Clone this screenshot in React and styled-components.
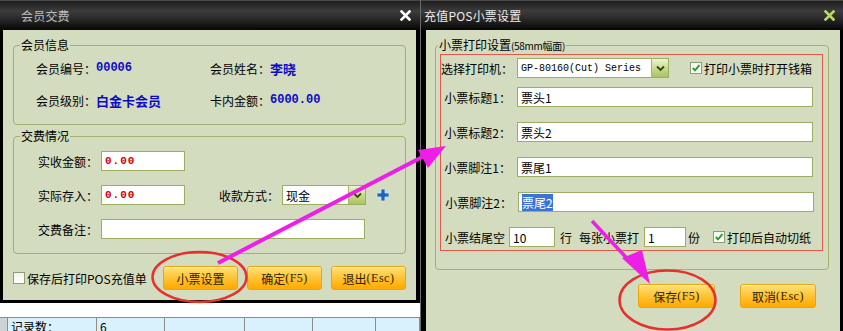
import React from 'react';
import styled, { createGlobalStyle } from 'styled-components';

const GlobalStyle = createGlobalStyle`
  html, body {
    margin: 0;
    padding: 0;
    background: #ffffff;
    overflow: hidden;
  }
  body {
    font-family: "Noto Sans CJK SC", "Liberation Sans", sans-serif;
    font-size: 12px;
    color: #000;
  }
`;

const Page = styled.div`
  position: relative;
  width: 843px;
  height: 331px;
  display: flex;
  overflow: hidden;
`;

const LeftColumn = styled.div`
  width: 420px;
  display: flex;
  flex-direction: column;
  background: #fff;
  overflow: hidden;
`;

const Dialog = styled.div`
  flex: none;
  display: flex;
  flex-direction: column;
  background: #000;
  width: ${(p) => p.width}px;
  height: ${(p) => (p.height ? `${p.height}px` : 'auto')};
  padding-bottom: ${(p) => p.padBottom || 0}px;
  border-left: ${(p) => (p.seam ? '1px solid #6a6a6a' : 'none')};
  box-sizing: border-box;
`;

const TitleBar = styled.div`
  height: 30px;
  flex: none;
  display: flex;
  align-items: center;
  justify-content: space-between;
  padding: 0 ${(p) => p.padRight}px 0 ${(p) => p.padLeft}px;
  background: linear-gradient(#1e1e1e 0%, #3c3c3c 35%, #2a2a2a 60%, #060606 100%);
  border-top: 1px solid #4a4a4a;
  box-sizing: border-box;
`;

const Title = styled.span`
  color: ${(p) => p.color};
  font-size: 12px;
  letter-spacing: 0.2px;
`;

const Body = styled.div`
  flex: 1;
  margin: 0 ${(p) => p.mr}px 0 ${(p) => p.ml}px;
  background: #d3dcbf;
  padding: 7px ${(p) => p.pr}px 0 ${(p) => p.pl}px;
  box-sizing: border-box;
  display: flex;
  flex-direction: column;
`;

const Group = styled.fieldset`
  margin: ${(p) => p.mt || 0}px 0 0 0;
  border: 1px solid #a1b170;
  border-radius: 4px;
  padding: 0 ${(p) => p.pr || 0}px ${(p) => p.pb}px ${(p) => p.pl}px;
  min-width: 0;
`;

const Legend = styled.legend`
  padding: 0 1px;
  margin-left: -${(p) => p.shift}px;
  font-size: 12px;
  line-height: 16px;
`;

const Small = styled.span`
  font-size: 10px;
  letter-spacing: -0.3px;
`;

const InfoGrid = styled.div`
  display: grid;
  grid-template-columns: 174px 1fr;
  grid-auto-rows: 30px;
  row-gap: 2px;
  align-items: center;
`;

const Pair = styled.div`
  display: flex;
  align-items: center;
`;

const Label = styled.span`
  box-sizing: border-box;
  white-space: nowrap;
  width: ${(p) => (p.width ? `${p.width}px` : 'auto')};
  text-align: ${(p) => (p.right ? 'right' : 'left')};
  padding-left: ${(p) => p.lead || 0}px;
  padding-right: ${(p) => p.gap || 0}px;
  flex: none;
`;

const Value = styled.span`
  color: #0a0ac8;
  font-weight: bold;
  font-size: ${(p) => (p.mono ? '12px' : '13px')};
  font-family: ${(p) => (p.mono ? '"Liberation Mono", monospace' : '"Noto Sans CJK SC", sans-serif')};
`;

const FormRows = styled.div`
  display: flex;
  flex-direction: column;
`;

const FormRow = styled.div`
  display: flex;
  align-items: center;
  height: ${(p) => p.h}px;
`;

const Input = styled.div`
  width: ${(p) => p.w}px;
  height: 20px;
  background: #fff;
  border: 1px solid #9bae62;
  box-sizing: border-box;
  display: flex;
  align-items: center;
  padding-left: 3px;
  margin-left: ${(p) => p.ml || 0}px;
  margin-right: ${(p) => p.mr || 0}px;
  flex: none;
  color: ${(p) => (p.red ? '#d40000' : '#000')};
  font-weight: ${(p) => (p.red ? 'bold' : 'normal')};
  font-family: ${(p) => (p.mono ? '"Liberation Mono", monospace' : 'inherit')};
  font-size: ${(p) => (p.mono ? `${p.mono === 'narrow' ? 10 : 11}px` : '12px')};
  letter-spacing: ${(p) => (p.red ? '1px' : '0')};
  white-space: nowrap;
  overflow: hidden;
`;

const SelectBox = styled(Input)`
  justify-content: space-between;
  padding-right: 0;
`;

const DropButton = styled.div`
  width: 16px;
  height: 18px;
  flex: none;
  background: linear-gradient(#eef4cf, #c3d685 60%, #aac264);
  border-left: 1px solid #a4b86c;
  display: flex;
  align-items: center;
  justify-content: center;
`;

const SelectedText = styled.span`
  background: #3a74d4;
  color: #fff;
`;

const Buttons = styled.div`
  display: flex;
  gap: ${(p) => p.gap}px;
  margin-left: auto;
`;

const OrangeButton = styled.div`
  width: ${(p) => p.w}px;
  height: 24px;
  box-sizing: border-box;
  border: 1px solid #e8a712;
  border-radius: 3px;
  background: linear-gradient(#ffe27a 0%, #ffc63a 45%, #ffa900 100%);
  color: #2e2200;
  display: flex;
  align-items: center;
  justify-content: center;
  font-size: 12px;
  white-space: nowrap;
  box-shadow: inset 0 1px 0 rgba(255, 255, 255, 0.5);
`;

const Latin = styled.span`
  font-family: "Liberation Serif", serif;
  font-size: 12px;
  letter-spacing: 0.5px;
`;

const BottomBar = styled.div`
  display: flex;
  align-items: center;
  height: 24px;
  margin-top: ${(p) => p.mt}px;
  padding-right: ${(p) => p.pr || 0}px;
`;

const Check = styled.span`
  width: 12px;
  height: 12px;
  box-sizing: border-box;
  border: 1px solid #8e9a78;
  background: linear-gradient(#f2f2ee, #ffffff);
  display: inline-flex;
  align-items: center;
  justify-content: center;
  margin: 0 ${(p) => p.gap || 2}px 0 ${(p) => p.ml || 0}px;
  flex: none;
`;

const CheckLabel = styled.label`
  display: flex;
  align-items: center;
  white-space: nowrap;
  margin-left: ${(p) => p.ml || 0}px;
`;

const RedFrame = styled.div`
  border: 1px solid #e2584a;
  padding: 2px 0 2px 0;
  display: flex;
  flex-direction: column;
  gap: 13px;
`;

const TicketRow = styled.div`
  display: flex;
  align-items: center;
  height: 22px;
  margin-bottom: ${(p) => (p.tight ? -6 : 0)}px;
`;

const Table = styled.div`
  flex: none;
  margin-top: 14px;
  display: grid;
  grid-template-columns: 8px 89px 68px 80px 68px 63px 44px;
  height: 20px;
  border-top: 1px solid #8c8c8c;
  background: #d9f1fc;
`;

const Cell = styled.div`
  border-right: 1px solid #8c8c8c;
  background: ${(p) => (p.head ? '#cfd3d4' : 'transparent')};
  padding-left: 3px;
  font-size: 12px;
  line-height: 17px;
  white-space: nowrap;
  overflow: hidden;
`;

const Overlay = styled.svg`
  position: absolute;
  left: 0;
  top: 0;
  pointer-events: none;
`;

const CloseIcon = ({ color }) => (
  <svg width="11" height="11" viewBox="0 0 11 11">
    <path d="M1.5 1.5 L9.5 9.5 M9.5 1.5 L1.5 9.5" stroke={color} strokeWidth="2.6" strokeLinecap="square" />
  </svg>
);

const Chevron = () => (
  <svg width="9" height="7" viewBox="0 0 9 7">
    <path d="M1 1.5 L4.5 5 L8 1.5" stroke="#2f4a10" strokeWidth="1.8" fill="none" />
  </svg>
);

const Tick = () => (
  <svg width="10" height="10" viewBox="0 0 10 10">
    <path d="M1.8 5 L4 7.4 L8.4 2.2" stroke="#24a02c" strokeWidth="1.9" fill="none" />
  </svg>
);

const PlusIcon = () => (
  <svg width="14" height="14" viewBox="0 0 14 14" style={{ marginLeft: 10 }}>
    <path d="M5 1 H9 V5 H13 V9 H9 V13 H5 V9 H1 V5 H5 Z" fill="#1c64c0" stroke="#d8e4f4" strokeWidth="0.8" />
  </svg>
);

const ticketLines = [
  ['小票标题1：', '票头1'],
  ['小票标题2：', '票头2'],
  ['小票脚注1：', '票尾1'],
];

export default function App() {
  return (
    <>
      <GlobalStyle />
      <Page>
        <LeftColumn>
          <Dialog width={420} height={303} padBottom={3}>
            <TitleBar padLeft={21} padRight={9}>
              <Title color="#bdbdbd">会员交费</Title>
              <CloseIcon color="#ffffff" />
            </TitleBar>
            <Body ml={3} mr={4} pl={10} pr={10}>
              <Group pl={22} pb={9}>
                <Legend shift={16}>会员信息</Legend>
                <InfoGrid>
                  <Pair>
                    <Label>会员编号：</Label>
                    <Value mono>00006</Value>
                  </Pair>
                  <Pair>
                    <Label>会员姓名：</Label>
                    <Value>李晓</Value>
                  </Pair>
                  <Pair>
                    <Label>会员级别：</Label>
                    <Value>白金卡会员</Value>
                  </Pair>
                  <Pair>
                    <Label>卡内金额：</Label>
                    <Value mono>6000.00</Value>
                  </Pair>
                </InfoGrid>
              </Group>

              <Group mt={3} pl={24} pb={7}>
                <Legend shift={18}>交费情况</Legend>
                <FormRows>
                  <FormRow h={34}>
                    <Label width={63}>实收金额：</Label>
                    <Input w={84} red mono>0.00</Input>
                  </FormRow>
                  <FormRow h={34}>
                    <Label width={63}>实际存入：</Label>
                    <Input w={84} red mono mr={34}>0.00</Input>
                    <Label width={63}>收款方式：</Label>
                    <SelectBox w={84}>
                      现金
                      <DropButton>
                        <Chevron />
                      </DropButton>
                    </SelectBox>
                    <PlusIcon />
                  </FormRow>
                  <FormRow h={34}>
                    <Label width={63}>交费备注：</Label>
                    <Input w={264} />
                  </FormRow>
                </FormRows>
              </Group>

              <BottomBar mt={12} pr={0}>
                <CheckLabel>
                  <Check gap={2} />
                  保存后打印POS充值单
                </CheckLabel>
                <Buttons gap={9}>
                  <OrangeButton w={75}>小票设置</OrangeButton>
                  <OrangeButton w={75}>
                    确定<Latin>(F5)</Latin>
                  </OrangeButton>
                  <OrangeButton w={75}>
                    退出<Latin>(Esc)</Latin>
                  </OrangeButton>
                </Buttons>
              </BottomBar>
            </Body>
          </Dialog>

          <Table>
            <Cell head />
            <Cell>记录数：</Cell>
            <Cell>6</Cell>
            <Cell />
            <Cell />
            <Cell />
            <Cell />
          </Table>
        </LeftColumn>

        <Dialog width={423} height={331} seam>
          <TitleBar padLeft={3} padRight={8}>
            <Title color="#ececec">充值POS小票设置</Title>
            <CloseIcon color="#b9dc5c" />
          </TitleBar>
          <Body ml={5} mr={3} pl={9} pr={11}>
            <Group pl={4} pr={5} pb={18}>
              <Legend shift={2}>
                小票打印设置<Small>(58mm幅面)</Small>
              </Legend>
              <RedFrame>
                <TicketRow tight>
                  <Label width={76} right gap={6}>选择打印机：</Label>
                  <SelectBox w={152} mono="narrow">
                    GP-80160(Cut) Series
                    <DropButton>
                      <Chevron />
                    </DropButton>
                  </SelectBox>
                  <CheckLabel ml={21}>
                    <Check gap={2}>
                      <Tick />
                    </Check>
                    打印小票时打开钱箱
                  </CheckLabel>
                </TicketRow>
                {ticketLines.map(([label, text]) => (
                  <TicketRow key={label}>
                    <Label width={76} right gap={6}>{label}</Label>
                    <Input w={296}>{text}</Input>
                  </TicketRow>
                ))}
                <TicketRow>
                  <Label width={77} right gap={6}>小票脚注2：</Label>
                  <Input w={296}>
                    <SelectedText>票尾2</SelectedText>
                  </Input>
                </TicketRow>
                <TicketRow>
                  <Label gap={4} lead={4}>小票结尾空</Label>
                  <Input w={46} mr={5}>10</Input>
                  <Label gap={7}>行</Label>
                  <Label gap={5}>每张小票打</Label>
                  <Input w={42} mr={2}>1</Input>
                  <Label>份</Label>
                  <CheckLabel ml={13}>
                    <Check gap={2}>
                      <Tick />
                    </Check>
                    打印后自动切纸
                  </CheckLabel>
                </TicketRow>
              </RedFrame>
            </Group>

            <BottomBar mt={14} pr={13}>
              <Buttons gap={25}>
                <OrangeButton w={77}>
                  保存<Latin>(F5)</Latin>
                </OrangeButton>
                <OrangeButton w={76}>
                  取消<Latin>(Esc)</Latin>
                </OrangeButton>
              </Buttons>
            </BottomBar>
          </Body>
        </Dialog>

        <Overlay width="843" height="331" viewBox="0 0 843 331">
          <ellipse cx="199.5" cy="277" rx="47" ry="25" fill="none" stroke="#e2332f" strokeWidth="2.5" />
          <ellipse cx="667.5" cy="300" rx="48" ry="29.5" fill="none" stroke="#e2332f" strokeWidth="2.5" />
          <line x1="218" y1="263" x2="428" y2="154" stroke="#ec1ee8" strokeWidth="4" />
          <polygon points="446,146 418,150 428,168" fill="#ec1ee8" />
          <line x1="592" y1="221" x2="636" y2="268" stroke="#ec1ee8" strokeWidth="3.5" />
          <polygon points="650,284 622,258 642,250" fill="#ec1ee8" />
        </Overlay>
      </Page>
    </>
  );
}
